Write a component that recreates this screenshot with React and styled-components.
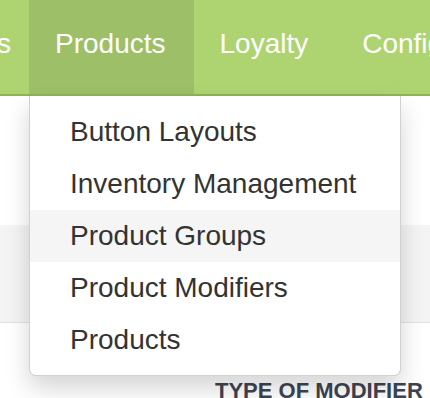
import styled, { createGlobalStyle } from "styled-components";

const GlobalStyle = createGlobalStyle`
  html, body {
    margin: 0;
    padding: 0;
    background: #fff;
    overflow: hidden;
  }
  body {
    font-family: "Liberation Sans", Arial, Helvetica, sans-serif;
    color: #333;
  }
`;

const Page = styled.div`
  width: 430px;
  height: 398px;
  display: flex;
  flex-direction: column;
  overflow: hidden;
`;

const NavBar = styled.nav`
  height: 94px;
  background: #aed472;
  border-bottom: 2px solid #8fb557;
  display: flex;
  flex-shrink: 0;
`;

const Tab = styled.div`
  position: relative;
  height: 94px;
  box-sizing: border-box;
  padding: 24px 28px 0 26px;
  font-size: 28px;
  line-height: 40px;
  color: #fff;
  white-space: nowrap;
  flex-shrink: 0;
  background: ${(props) => (props.active ? "#9dbf68" : "transparent")};
`;

const ClippedTab = styled(Tab)`
  width: 29px;
  padding-left: 0;
  padding-right: 18px;
  display: flex;
  justify-content: flex-end;
  overflow: hidden;
`;

const Menu = styled.ul`
  position: absolute;
  top: calc(100% + 2px);
  left: 0;
  width: 372px;
  box-sizing: border-box;
  margin: 0;
  padding: 10px 0 9px;
  list-style: none;
  background: #fff;
  border: 1px solid rgba(0, 0, 0, 0.18);
  border-top: none;
  border-radius: 0 0 7px 7px;
  box-shadow: 0 12px 24px rgba(0, 0, 0, 0.17);
  z-index: 10;
`;

const MenuItem = styled.li`
  padding: 6px 40px;
  font-size: 28px;
  line-height: 40px;
  color: #333;
  white-space: nowrap;
  background: ${(props) => (props.hovered ? "#f5f5f5" : "transparent")};
`;

const Blank = styled.div`
  height: 129px;
  flex-shrink: 0;
`;

const Band = styled.div`
  height: 97px;
  flex-shrink: 0;
  background: #f4f4f4;
  border-bottom: 1px solid #e2e2e2;
`;

const Heading = styled.h3`
  margin: 55px 0 0;
  padding-left: 215px;
  font-size: 22px;
  line-height: 25px;
  font-weight: 700;
  color: #3d4452;
  white-space: nowrap;
  text-transform: uppercase;
`;

const items = [
  "Button Layouts",
  "Inventory Management",
  "Product Groups",
  "Product Modifiers",
  "Products",
];

export default function App() {
  return (
    <Page>
      <GlobalStyle />
      <NavBar>
        <ClippedTab>Reports</ClippedTab>
        <Tab active>
          Products
          <Menu>
            {items.map((item) => (
              <MenuItem key={item} hovered={item === "Product Groups"}>
                {item}
              </MenuItem>
            ))}
          </Menu>
        </Tab>
        <Tab>Loyalty</Tab>
        <Tab>Configuration</Tab>
      </NavBar>
      <Blank />
      <Band />
      <Heading>Type of modifier</Heading>
    </Page>
  );
}
